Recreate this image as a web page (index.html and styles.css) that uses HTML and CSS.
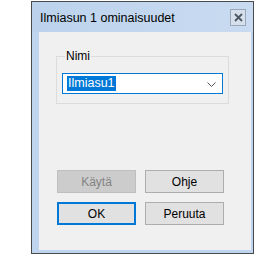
FILE: index.html
```html
<!DOCTYPE html>
<html>
<head>
<meta charset="utf-8">
<link rel="stylesheet" href="styles.css">
</head>
<body>
<div class="window">
  <div class="titlebar">
    <span class="title">Ilmiasun 1 ominaisuudet</span>
    <span class="close">
      <svg width="9" height="9" viewBox="0 0 9 9"><path d="M1 1L8 8M8 1L1 8" stroke="#4e5863" stroke-width="1.8"/></svg>
    </span>
  </div>
  <div class="frame">
    <div class="client">
      <fieldset class="group">
        <legend class="legend">Nimi</legend>
        <div class="combo">
          <span class="sel">Ilmiasu1</span>
          <svg class="chev" width="9" height="5" viewBox="0 0 9 5"><path d="M0.5 0.5L4.5 4.5L8.5 0.5" fill="none" stroke="#555" stroke-width="1"/></svg>
        </div>
      </fieldset>
      <div class="buttons">
        <div class="btn disabled">Käytä</div>
        <div class="btn">Ohje</div>
        <div class="btn default">OK</div>
        <div class="btn">Peruuta</div>
      </div>
    </div>
  </div>
</div>
</body>
</html>
```
FILE: styles.css
```css
html, body {
  margin: 0;
  padding: 0;
  background: #ffffff;
}
body {
  font-family: "Liberation Sans", Arial, sans-serif;
  font-size: 12px;
  color: #000;
}
.window {
  margin: 1px 0 0 31px;
  width: 221px;
  height: 251px;
  border: 1px solid #4a4a4a;
  background: #bfd4ee;
  display: flex;
  flex-direction: column;
}
.titlebar {
  height: 30px;
  display: flex;
  align-items: center;
  background: linear-gradient(to right, #bcd2ec, #c9dbf1);
  padding: 0 7px 0 8px;
}
.title {
  flex: 1;
  font-size: 12.5px;
  color: #000;
  padding-top: 1px;
}
.close {
  width: 14px;
  height: 15px;
  border: 1px solid #9aa8b8;
  background: #d6e0ec;
  display: flex;
  align-items: center;
  justify-content: center;
}
.frame {
  flex: 1;
  padding: 0 2px 3px 7px;
  background: #bfd4ee;
  display: flex;
}
.client {
  flex: 1;
  background: #f0f0f0;
  padding: 17px 22px 0 17px;
}
.group {
  margin: 0;
  border: 1px solid #dcdcdc;
  padding: 10px 5px 9px 5px;
  min-width: 0;
}
.legend {
  padding: 0 1px;
  margin-left: 3px;
  font-size: 12px;
  line-height: 14px;
}
.combo {
  height: 19px;
  border: 1px solid #0078d7;
  background: #fff;
  display: flex;
  align-items: center;
  padding: 0 6px 0 4px;
}
.sel {
  background: #0078d7;
  color: #fff;
  line-height: 15px;
  padding: 0 1px;
  font-size: 12.5px;
}
.chev {
  margin-left: auto;
  margin-top: 2px;
}
.buttons {
  display: grid;
  grid-template-columns: 79px 79px;
  grid-auto-rows: 23px;
  column-gap: 9px;
  row-gap: 9px;
  margin: 66px 0 0 1px;
}
.btn {
  box-sizing: border-box;
  border: 1px solid #adadad;
  background: #e1e1e1;
  display: flex;
  align-items: center;
  justify-content: center;
  font-size: 12px;
}
.btn.disabled {
  background: #cccccc;
  border-color: #bfbfbf;
  color: #838383;
}
.btn.default {
  border: 2px solid #0078d7;
}
```
